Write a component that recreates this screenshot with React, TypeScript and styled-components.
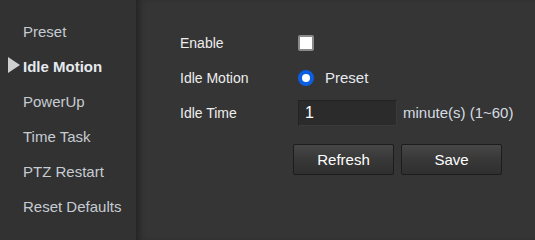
import React from "react";
import styled, { createGlobalStyle } from "styled-components";

const Global = createGlobalStyle`
  html, body { margin: 0; padding: 0; background: #353535; }
  body { font-family: Arial, "Liberation Sans", sans-serif; }
`;

const Page = styled.div`
  display: flex;
  width: 535px;
  height: 240px;
  overflow: hidden;
  background: #353535;
`;

const Sidebar = styled.nav`
  width: 136px;
  flex: none;
  background: #323232;
  padding-top: 14px;
  box-sizing: border-box;
  display: flex;
  flex-direction: column;
`;

const NavItem = styled.div<{ $active?: boolean }>`
  position: relative;
  height: 35px;
  display: flex;
  align-items: center;
  padding-left: 23px;
  font-size: 15px;
  font-weight: ${(p) => (p.$active ? "bold" : "normal")};
  color: ${(p) => (p.$active ? "#e6eaee" : "#c6ccd2")};
  white-space: nowrap;
`;

const Arrow = styled.span`
  position: absolute;
  left: 8px;
  top: 50%;
  transform: translateY(-50%);
  width: 0;
  height: 0;
  border-top: 8px solid transparent;
  border-bottom: 8px solid transparent;
  border-left: 12px solid #cfcfcf;
  margin-top: -2px;
`;

const Main = styled.main`
  flex: 1;
  box-shadow: inset 6px 0 6px -3px rgba(0, 0, 0, 0.35);
  padding: 25px 0 0 44px;
  box-sizing: border-box;
`;

const Row = styled.div`
  display: grid;
  grid-template-columns: 118px auto;
  align-items: center;
  height: 35px;
`;

const Label = styled.span`
  font-size: 14px;
  color: #eeeeee;
`;

const Control = styled.div`
  display: flex;
  align-items: center;
  gap: 6px;
  font-size: 15px;
  color: #e6eaee;
`;

const Checkbox = styled.span`
  width: 12px;
  height: 12px;
  border: 2px solid #8a8a8a;
  border-radius: 2px;
  background: #ffffff;
`;

const Radio = styled.span`
  width: 16px;
  height: 16px;
  border-radius: 50%;
  background: #ffffff;
  border: 4px solid #0b5fe0;
  box-sizing: border-box;
  margin-right: 5px;
`;

const Input = styled.div`
  width: 99px;
  height: 26px;
  box-sizing: border-box;
  background: #2b2b2b;
  border: 1px solid #232323;
  border-right-color: #3a3a3a;
  border-bottom-color: #3a3a3a;
  padding-left: 6px;
  display: flex;
  align-items: center;
  font-size: 16px;
  color: #ffffff;
`;

const Hint = styled.span`
  font-size: 15px;
  color: #d6dce2;
`;

const Buttons = styled.div`
  display: flex;
  gap: 7px;
  margin: 14px 0 0 113px;
`;

const Button = styled.button`
  width: 101px;
  height: 31px;
  box-sizing: border-box;
  border: 1px solid #1c1c1c;
  border-radius: 2px;
  background: linear-gradient(#474747, #393939 45%, #2f2f2f);
  color: #ffffff;
  font-family: Arial, "Liberation Sans", sans-serif;
  font-size: 15px;
  padding: 0;
  cursor: pointer;
`;

const navItems = ["Preset", "Idle Motion", "PowerUp", "Time Task", "PTZ Restart", "Reset Defaults"];

export default function App() {
  return (
    <>
      <Global />
      <Page>
        <Sidebar>
          {navItems.map((n) => (
            <NavItem key={n} $active={n === "Idle Motion"}>
              {n === "Idle Motion" && <Arrow />}
              {n}
            </NavItem>
          ))}
        </Sidebar>
        <Main>
          <Row>
            <Label>Enable</Label>
            <Control>
              <Checkbox />
            </Control>
          </Row>
          <Row>
            <Label>Idle Motion</Label>
            <Control>
              <Radio />
              Preset
            </Control>
          </Row>
          <Row>
            <Label>Idle Time</Label>
            <Control>
              <Input>1</Input>
              <Hint>minute(s) (1~60)</Hint>
            </Control>
          </Row>
          <Buttons>
            <Button>Refresh</Button>
            <Button>Save</Button>
          </Buttons>
        </Main>
      </Page>
    </>
  );
}
